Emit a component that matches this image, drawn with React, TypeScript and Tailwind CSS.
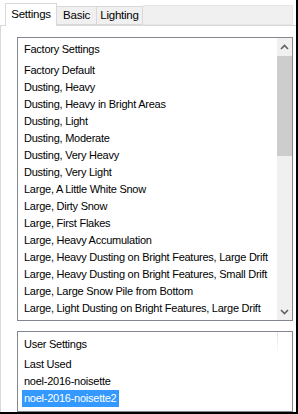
const factoryItems = [
  "Factory Default",
  "Dusting, Heavy",
  "Dusting, Heavy in Bright Areas",
  "Dusting, Light",
  "Dusting, Moderate",
  "Dusting, Very Heavy",
  "Dusting, Very Light",
  "Large, A Little White Snow",
  "Large, Dirty Snow",
  "Large, First Flakes",
  "Large, Heavy Accumulation",
  "Large, Heavy Dusting on Bright Features, Large Drift",
  "Large, Heavy Dusting on Bright Features, Small Drift",
  "Large, Large Snow Pile from Bottom",
  "Large, Light Dusting on Bright Features, Large Drift",
];

const userItems = ["Last Used", "noel-2016-noisette", "noel-2016-noisette2"];

function Chevron({ up }: { up?: boolean }) {
  return (
    <svg width="9" height="6" viewBox="0 0 9 6" className="block">
      <path
        d={up ? "M1 5 L4.5 1.5 L8 5" : "M1 1 L4.5 4.5 L8 1"}
        fill="none"
        stroke="#606060"
        strokeWidth="1.6"
      />
    </svg>
  );
}

export default function App() {
  return (
    <div className="h-[414px] w-[298px] overflow-hidden border-r-2 border-b-2 border-black bg-white font-['Liberation_Sans',Arial,sans-serif] text-[11px] leading-[17px] tracking-[-0.25px] text-black">
      <div className="flex h-[25px] items-end pl-[5px] pr-[3px]">
        <div className="relative z-10 -mb-px flex h-[23px] w-[52px] items-center justify-center border border-b-0 border-[#d9d9d9] bg-white pb-[1px] text-[11.5px]">
          Settings
        </div>
        <div className="flex h-[19px] w-[40px] items-center justify-center border border-l-0 border-[#d9d9d9] bg-[#f0f0f0] text-[11.5px]">
          Basic
        </div>
        <div className="flex h-[19px] w-[46px] items-center justify-center border border-l-0 border-[#d9d9d9] bg-[#f0f0f0] text-[11.5px]">
          Lighting
        </div>
        <div className="h-[20px] flex-1 border border-l-0 border-[#e6e6e6] bg-[#f0f0f0]" />
      </div>

      <div className="flex h-[387px] flex-col border-l border-t border-[#d9d9d9] pt-[11px] pr-[3px] pl-[16px]">
        <div className="flex h-[284px] border border-[#828790]">
          <div className="min-w-0 flex-1 overflow-hidden pt-[3px] pl-[6px]">
            <div className="h-[17px]">Factory Settings</div>
            <div className="mt-[4px]">
              {factoryItems.map((item) => (
                <div key={item} className="h-[17px] whitespace-nowrap">
                  {item}
                </div>
              ))}
            </div>
          </div>
          <div className="flex w-[15px] shrink-0 flex-col bg-[#f0f0f0]">
            <div className="flex h-[17px] items-center justify-center">
              <Chevron up />
            </div>
            <div className="mt-px h-[100px] bg-[#cdcdcd]" />
            <div className="flex-1" />
            <div className="flex h-[17px] items-center justify-center">
              <Chevron />
            </div>
          </div>
        </div>

        <div className="relative mt-[10px] flex-1 border border-b-0 border-[#828790]">
          <div className="pt-[4px] pl-[6px]">
            <div className="h-[17px]">User Settings</div>
            <div className="mt-[3px]">
              {userItems.map((item, i) => (
                <div key={item} className="h-[17px]">
                  {i === userItems.length - 1 ? (
                    <span className="-ml-[2px] inline-block h-[17px] bg-[#3399ff] px-[2px] text-white">
                      {item}
                    </span>
                  ) : (
                    item
                  )}
                </div>
              ))}
            </div>
          </div>
          <div className="absolute top-0 right-[14px] h-[24px] w-px bg-gradient-to-b from-[#e4e4e4] to-transparent" />
        </div>
        <div className="h-px bg-[#828790]" />
      </div>
    </div>
  );
}
